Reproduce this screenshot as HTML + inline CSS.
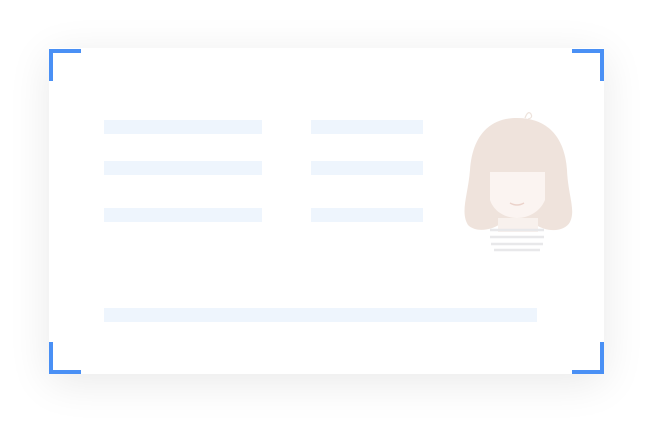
<!DOCTYPE html>
<html><head><style>
html,body{margin:0;padding:0;width:653px;height:424px;background:#fff;overflow:hidden}
.card{position:absolute;left:49px;top:48px;width:555px;height:326px;background:#fff;box-shadow:0 8px 40px rgba(0,0,0,0.09)}
.b{position:absolute;background:#eef5fd;height:14px}
.c{position:absolute;width:32px;height:32px;border:0 solid #4a90f5}
</style></head><body>
<div class="card"></div>
<div class="c" style="left:49px;top:49px;border-left-width:4px;border-top-width:4px;width:28px;height:28px"></div>
<div class="c" style="left:572px;top:49px;border-right-width:4px;border-top-width:4px;width:28px;height:28px"></div>
<div class="c" style="left:49px;top:342px;border-left-width:4px;border-bottom-width:4px;width:28px;height:28px"></div>
<div class="c" style="left:572px;top:342px;border-right-width:4px;border-bottom-width:4px;width:28px;height:28px"></div>
<div class="b" style="left:104px;top:120px;width:158px"></div>
<div class="b" style="left:311px;top:120px;width:112px"></div>
<div class="b" style="left:104px;top:161px;width:158px"></div>
<div class="b" style="left:311px;top:161px;width:112px"></div>
<div class="b" style="left:104px;top:208px;width:158px"></div>
<div class="b" style="left:311px;top:208px;width:112px"></div>
<div class="b" style="left:104px;top:308px;width:433px"></div>
<svg style="position:absolute;left:0;top:0" width="653" height="424">
<path d="M525 118 q3-8 6-4 q2 4-3 5" fill="none" stroke="#eee3dc" stroke-width="1.2"/>
<path d="M517 118 C486 118 472 140 470 170 C468 195 460 212 468 225 C476 233 492 230 500 224 L535 224 C545 232 564 233 570 222 C576 210 568 195 567 170 C565 140 550 118 517 118Z" fill="#efe3dc"/>
<rect x="498" y="218" width="40" height="14" fill="#f8f1ed"/>
<g stroke="#e8e8ea" stroke-width="2.5">
<line x1="490" y1="230" x2="544" y2="230"/><line x1="490" y1="237" x2="544" y2="237"/><line x1="491" y1="244" x2="543" y2="244"/><line x1="494" y1="250" x2="540" y2="250"/>
</g>
<path d="M490 172 L545 172 L545 200 C540 212 528 218 517 218 C506 218 494 212 490 200Z" fill="#fbf4f1"/>
<path d="M510 203 q7 4 14 0" fill="none" stroke="#ebd2ca" stroke-width="1.5"/>
</svg>
</body></html>
